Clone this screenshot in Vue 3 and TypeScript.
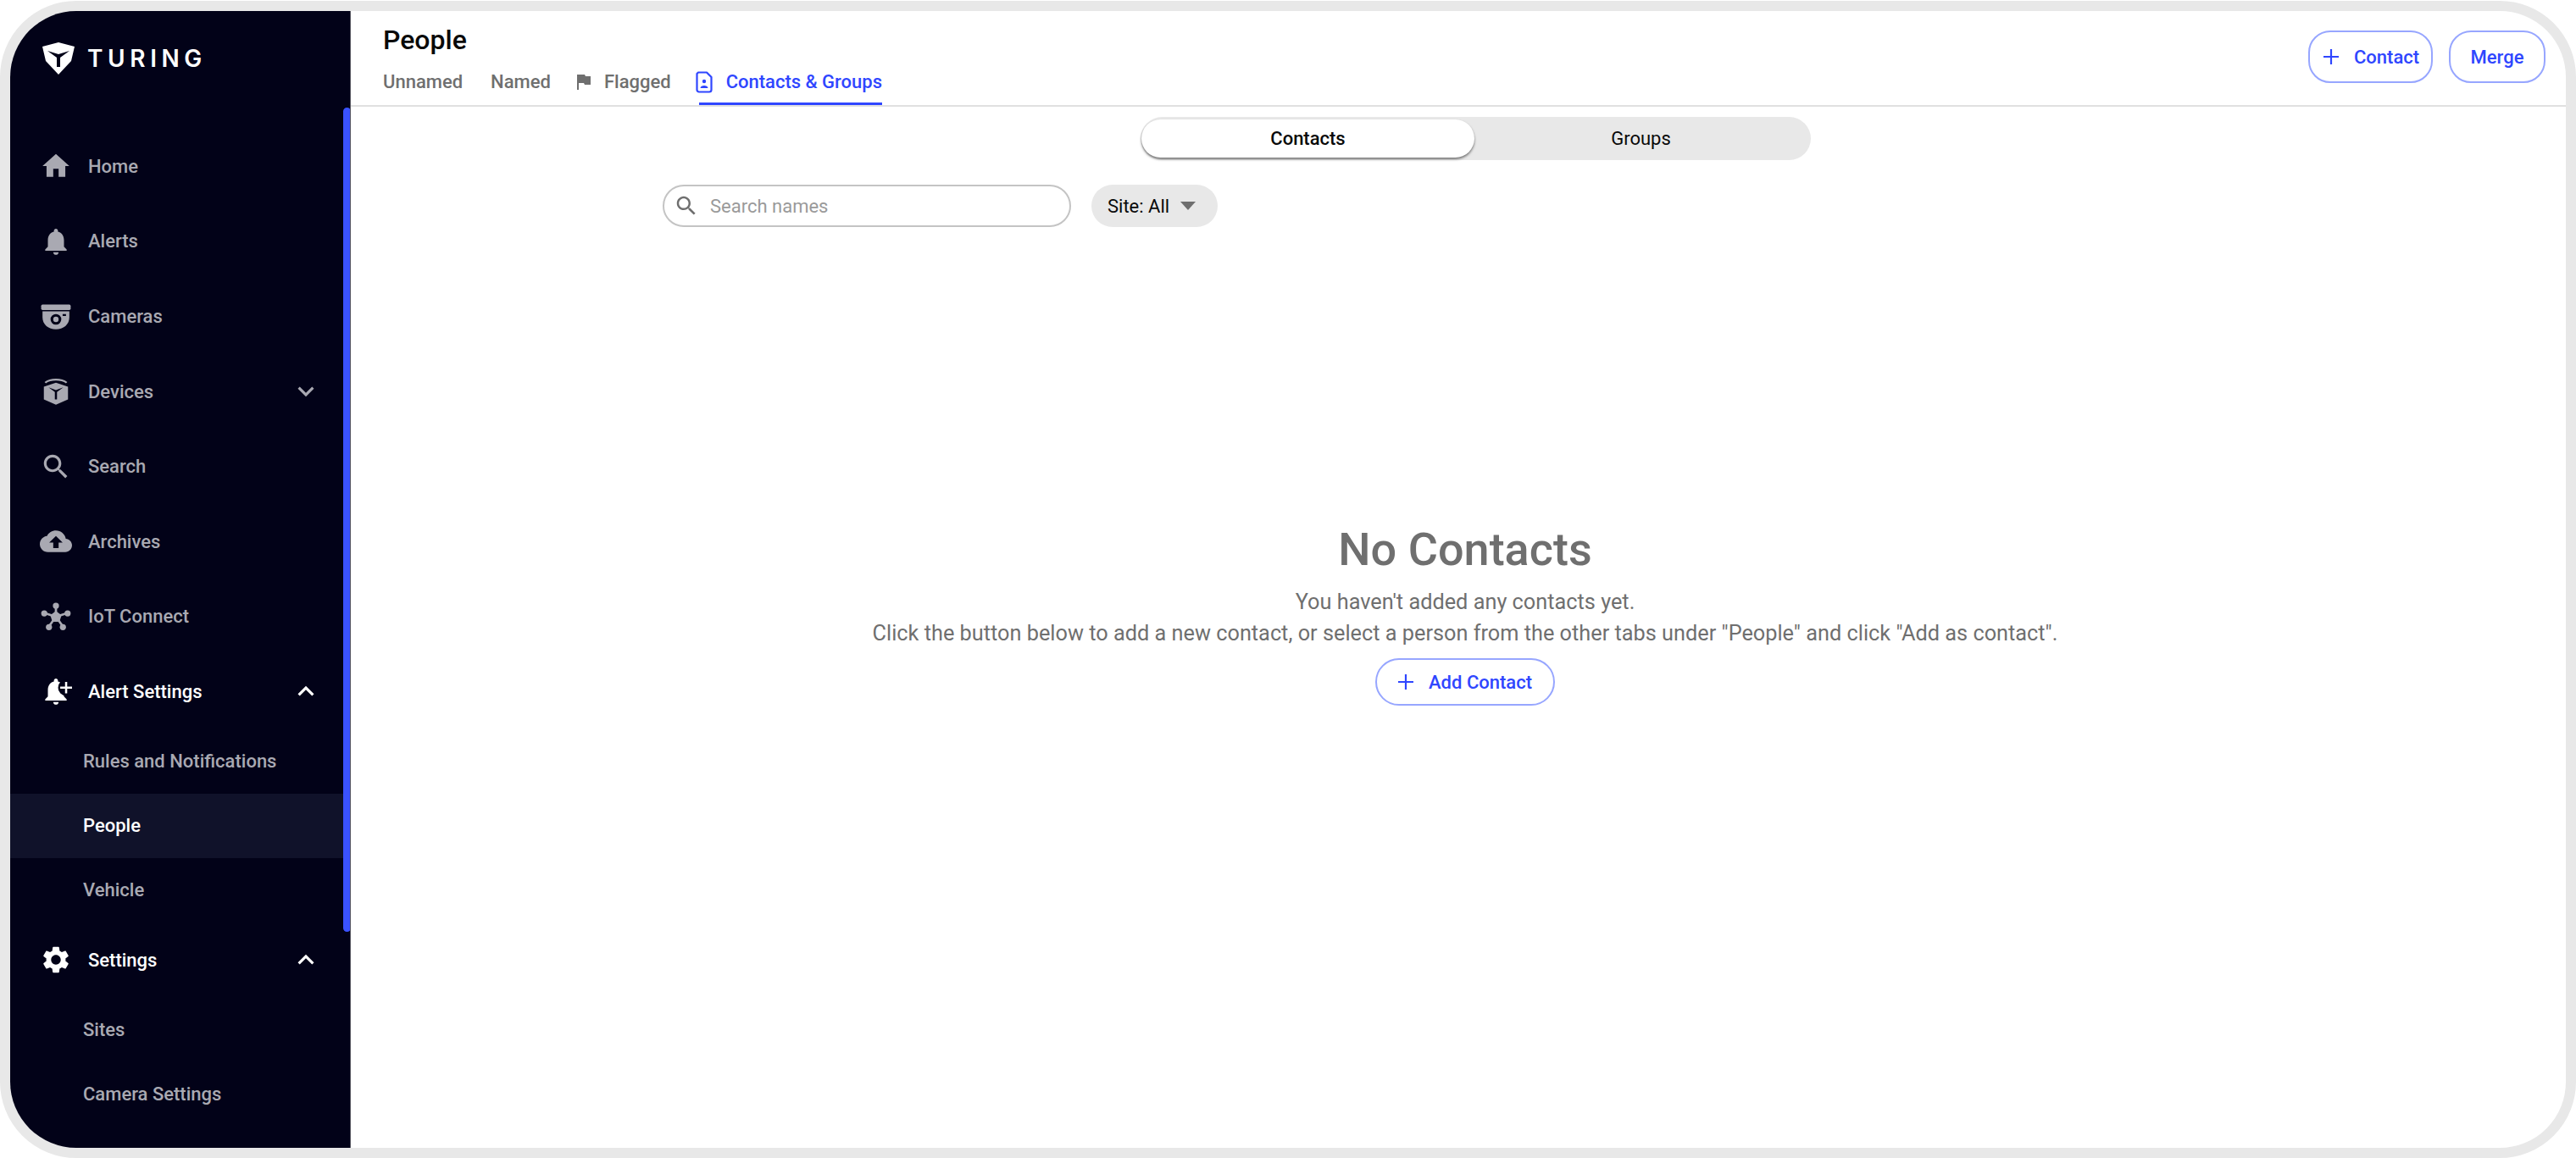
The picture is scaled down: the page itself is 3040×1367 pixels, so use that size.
<script setup lang="ts">
interface NavItem {
  label: string
  icon?: string
  chevron?: 'up' | 'down'
  active?: boolean
  sub?: boolean
  selected?: boolean
}
const nav: NavItem[] = [
  { label: 'Home', icon: 'home' },
  { label: 'Alerts', icon: 'bell' },
  { label: 'Cameras', icon: 'camera' },
  { label: 'Devices', icon: 'cube', chevron: 'down' },
  { label: 'Search', icon: 'search' },
  { label: 'Archives', icon: 'cloud' },
  { label: 'IoT Connect', icon: 'hub' },
  { label: 'Alert Settings', icon: 'bellplus', chevron: 'up', active: true },
  { label: 'Rules and Notifications', sub: true },
  { label: 'People', sub: true, selected: true },
  { label: 'Vehicle', sub: true },
  { label: 'Settings', icon: 'gear', chevron: 'up', active: true },
  { label: 'Sites', sub: true },
  { label: 'Camera Settings', sub: true },
]
</script>

<template>
  <div class="frame">
    <aside class="sidebar">
      <div class="logo">
        <svg class="logo-mark" viewBox="0 0 38 38">
          <path fill="#fff" fill-rule="evenodd" d="M0 5 19 0 38 5 34 22 19 38 4 22ZM6 10 17 18 17 29 21 29 21 18 32 10 19 14Z" />
        </svg>
        <span class="logo-text">TURING</span>
      </div>
      <nav class="nav">
        <div
          v-for="item in nav"
          :key="item.label"
          class="row"
          :class="{ sub: item.sub, active: item.active, selected: item.selected }"
        >
          <svg v-if="item.icon" class="icon" viewBox="0 0 24 24" fill="currentColor">
            <path v-if="item.icon === 'home'" d="M10 20v-6h4v6h5v-8h3L12 3 2 12h3v8z" />
            <path v-else-if="item.icon === 'bell'" d="M12 22c1.1 0 2-.9 2-2h-4c0 1.1.89 2 2 2zm6-6v-5c0-3.07-1.64-5.64-4.5-6.32V4c0-.83-.67-1.5-1.5-1.5s-1.5.67-1.5 1.5v.68C7.63 5.36 6 7.92 6 11v5l-2 2v1h16v-1l-2-2z" />
            <g v-else-if="item.icon === 'camera'">
              <rect x="1" y="3.500" width="22" height="4" rx="1" />
              <path fill-rule="evenodd" d="M2 8.500H22V13C22 18.500 17.500 22 12 22S2 18.500 2 13ZM12 10.500A4 4 0 1 0 12 18.500 4 4 0 0 0 12 10.500ZM17 10.500H19.500V12H17Z" />
              <circle cx="12" cy="14.500" r="2" />
            </g>
            <g v-else-if="item.icon === 'cube'">
              <path d="M12 2.500C8.500 2.500 5.500 3.300 3.500 5L4.500 6C6.300 4.700 9 4 12 4S17.700 4.700 19.500 6L20.500 5C18.500 3.300 15.500 2.500 12 2.500Z" />
              <path fill-rule="evenodd" d="M12 5.500 21 8.500V18L12 22 3 18V8.500ZM6.500 9 11.200 12.500V18H12.800V12.500L17.500 9 12 11Z" />
            </g>
            <path v-else-if="item.icon === 'search'" d="M15.500 14h-.79l-.28-.27C15.410 12.590 16 11.110 16 9.500 16 5.910 13.090 3 9.500 3S3 5.910 3 9.500 5.910 16 9.500 16c1.610 0 3.090-.59 4.230-1.570l.27.280v.79l5 4.990L20.490 19l-4.990-5zm-6 0C7.010 14 5 11.990 5 9.500S7.010 5 9.500 5 14 7.010 14 9.500 11.990 14 9.500 14z" />
            <path v-else-if="item.icon === 'cloud'" d="M19.350 10.040C18.670 6.590 15.640 4 12 4 9.110 4 6.600 5.640 5.350 8.040 2.340 8.360 0 10.910 0 14c0 3.310 2.690 6 6 6h13c2.760 0 5-2.240 5-5 0-2.640-2.050-4.780-4.650-4.960zM14 13v4h-4v-4H7l5-5 5 5h-3z" />
            <g v-else-if="item.icon === 'hub'">
              <path d="M12 12V4M12 12 4 9.500M12 12 20 9.500M12 12 7 19M12 12 17 19" stroke="currentColor" stroke-width="1.700" />
              <path d="M12 7.800 16.200 10.900 14.600 15.800H9.400L7.800 10.900Z" />
              <circle cx="12" cy="3.800" r="2.300" />
              <circle cx="3.300" cy="9.500" r="2.300" />
              <circle cx="20.700" cy="9.500" r="2.300" />
              <circle cx="6.800" cy="19.800" r="2.300" />
              <circle cx="17.200" cy="19.800" r="2.300" />
            </g>
            <g v-else-if="item.icon === 'bellplus'">
              <path d="M12 22c1.100 0 2-.9 2-2h-4c0 1.100.89 2 2 2zm6-6v-5c0-3.070-1.640-5.640-4.500-6.320V4c0-.83-.67-1.500-1.500-1.500s-1.500.67-1.500 1.500v.68C7.630 5.360 6 7.920 6 11v5l-2 2v1h16v-1l-2-2z" />
              <circle cx="19.600" cy="9.300" r="6" fill="#020218" />
              <path d="M18.800 5h1.600v3.500h3.600v1.600h-3.600v3.500h-1.600v-3.500h-3.600V8.500h3.600z" />
            </g>
            <path v-else-if="item.icon === 'gear'" d="M19.140 12.940c.04-.3.060-.61.060-.94 0-.32-.02-.64-.07-.94l2.030-1.580c.18-.14.230-.41.120-.61l-1.920-3.320c-.12-.22-.37-.29-.59-.22l-2.390.96c-.5-.38-1.030-.7-1.620-.94l-.36-2.540c-.04-.24-.24-.41-.48-.41h-3.840c-.24 0-.43.170-.47.410l-.36 2.540c-.59.240-1.130.570-1.620.94l-2.390-.96c-.22-.08-.47 0-.59.220L2.740 8.870c-.12.210-.08.470.120.610l2.030 1.580c-.05.3-.09.630-.09.940s.020.640.070.940l-2.030 1.580c-.18.140-.23.410-.12.610l1.920 3.320c.12.220.370.290.590.220l2.390-.96c.5.380 1.030.7 1.620.94l.36 2.540c.050.240.240.410.480.410h3.840c.24 0 .44-.17.470-.41l.36-2.540c.59-.24 1.130-.56 1.620-.94l2.390.96c.22.080.47 0 .59-.22l1.920-3.320c.12-.22.070-.47-.12-.61l-2.010-1.580zM12 15.600c-1.980 0-3.600-1.620-3.600-3.600s1.620-3.600 3.600-3.600 3.600 1.620 3.600 3.600-1.620 3.600-3.600 3.600z" />
          </svg>
          <span class="row-label">{{ item.label }}</span>
          <svg v-if="item.chevron" class="chev" :class="{ up: item.chevron === 'up' }" viewBox="0 0 24 24" fill="currentColor">
            <path d="M16.590 8.590 12 13.170 7.410 8.590 6 10l6 6 6-6z" />
          </svg>
        </div>
      </nav>
      <div class="scrollbar"></div>
    </aside>

    <main class="main">
      <header class="header">
        <div class="header-left">
          <h1 class="title">People</h1>
          <div class="tabs">
            <span class="tab">Unnamed</span>
            <span class="tab">Named</span>
            <span class="tab with-icon">
              <svg class="tab-icon flag" viewBox="0 0 18 20" fill="#6f6f6f"><path d="M1 1h9l1 2h6v10h-7l-1-2H3v8H1z" /></svg>
              Flagged
            </span>
            <span class="tab with-icon current">
              <svg class="tab-icon doc" viewBox="0 0 20 26" fill="none" stroke="currentColor" stroke-width="2.200">
                <path d="M3 1.500H13L18.500 7V22A2.500 2.500 0 0 1 16 24.500H4A2.500 2.500 0 0 1 1.500 22V3Z" stroke-linejoin="round" />
                <circle cx="10" cy="12" r="2.200" fill="currentColor" stroke="none" />
                <path d="M5.500 20C5.500 16 14.500 16 14.500 20Z" fill="currentColor" stroke="none" />
              </svg>
              Contacts &amp; Groups
            </span>
          </div>
        </div>
        <div class="header-actions">
          <button class="btn contact" type="button">
            <svg class="plus" viewBox="0 0 18 18" stroke="currentColor" stroke-width="2.200"><path d="M9 0V18M0 9H18" /></svg>
            Contact
          </button>
          <button class="btn merge" type="button">Merge</button>
        </div>
      </header>

      <section class="content">
        <div class="segment">
          <div class="seg seg-on">Contacts</div>
          <div class="seg seg-off">Groups</div>
        </div>

        <div class="toolbar">
          <div class="search">
            <svg class="search-icon" viewBox="0 0 24 24" fill="#6f6f6f"><path d="M15.500 14h-.79l-.28-.27C15.410 12.590 16 11.110 16 9.500 16 5.910 13.090 3 9.500 3S3 5.910 3 9.500 5.910 16 9.500 16c1.610 0 3.090-.59 4.230-1.570l.27.280v.79l5 4.990L20.490 19l-4.990-5zm-6 0C7.010 14 5 11.990 5 9.500S7.010 5 9.500 5 14 7.010 14 9.500 11.990 14 9.500 14z" /></svg>
            <span class="placeholder">Search names</span>
          </div>
          <div class="site">
            Site: All
            <span class="caret"></span>
          </div>
        </div>

        <div class="empty">
          <h2 class="empty-title">No Contacts</h2>
          <p class="empty-text">You haven't added any contacts yet.</p>
          <p class="empty-text">Click the button below to add a new contact, or select a person from the other tabs under "People" and click "Add as contact".</p>
          <button class="btn add" type="button">
            <svg class="plus" viewBox="0 0 18 18" stroke="currentColor" stroke-width="2.200"><path d="M9 0V18M0 9H18" /></svg>
            Add Contact
          </button>
        </div>
      </section>
    </main>
  </div>
</template>

<style scoped>
.frame {
  box-sizing: border-box;
  width: 3040px;
  height: 1366px;
  margin-top: 1px;
  border: 12px solid #e8e8e8;
  border-radius: 90px;
  overflow: hidden;
  display: flex;
  background: #fff;
  font-family: Roboto, "Liberation Sans", sans-serif;
}
.sidebar {
  position: relative;
  box-sizing: border-box;
  flex: 0 0 402px;
  height: 100%;
  background: #020218;
  border-right: 1px solid #55555f;
  overflow: hidden;
}
.logo {
  display: flex;
  align-items: center;
  height: 139px;
  padding: 0 0 27px 38px;
  box-sizing: border-box;
  color: #fff;
}
.logo-mark {
  width: 38px;
  height: 38px;
}
.logo-text {
  margin-left: 15px;
  font-family: Inter, sans-serif;
  font-size: 28px;
  font-weight: 600;
  letter-spacing: 5.6px;
}
.row {
  display: flex;
  align-items: center;
  height: 88.6px;
  padding: 0 35px;
  color: #a9a9b2;
  font-size: 22px;
  font-weight: 500;
}
.row.active {
  color: #fff;
}
.row.sub {
  height: 76px;
  padding-left: 86px;
}
.row.selected {
  background: #10122a;
  color: #fff;
}
.icon {
  flex: 0 0 38px;
  width: 38px;
  height: 38px;
  margin-right: 19px;
}
.chev {
  width: 38px;
  height: 38px;
  margin-left: auto;
  margin-right: -2px;
}
.chev.up {
  transform: rotate(180deg);
}
.scrollbar {
  position: absolute;
  top: 114px;
  left: 393px;
  width: 9px;
  height: 973px;
  border-radius: 5px;
  background: #3a52ff;
}
.main {
  flex: 1;
  min-width: 0;
  display: flex;
  flex-direction: column;
}
.header {
  box-sizing: border-box;
  height: 113px;
  flex: 0 0 113px;
  border-bottom: 2px solid #e0e0e0;
  display: flex;
  justify-content: space-between;
  padding: 0 24px 0 38px;
}
.title {
  margin: 15px 0 0;
  font-size: 32px;
  line-height: 38px;
  font-weight: 500;
  color: #0a0a0a;
}
.tabs {
  display: flex;
  margin-top: 16px;
  gap: 33px;
}
.tab {
  display: flex;
  align-items: flex-start;
  height: 42px;
  box-sizing: border-box;
  font-size: 22px;
  line-height: 30px;
  font-weight: 500;
  color: #6f6f6f;
}
.tab.current {
  color: #2f46ff;
  box-shadow: inset 0 -3px 0 #2f46ff;
}
.tab-icon {
  width: 18px;
  height: 20px;
  margin: 5px 15px 0 0;
}
.tab-icon.flag {
  margin-left: -3px;
}
.tab-icon.doc {
  width: 20px;
  height: 26px;
  margin: 2px 16px 0 -4px;
}
.header-actions {
  display: flex;
  gap: 19px;
  padding-top: 23px;
}
.btn {
  display: inline-flex;
  align-items: center;
  justify-content: center;
  box-sizing: border-box;
  height: 62px;
  padding: 0;
  border: 2px solid #97a6ff;
  border-radius: 26px;
  background: #fff;
  color: #2f46ff;
  font: 500 22px Roboto, "Liberation Sans", sans-serif;
}
.btn.contact {
  width: 147px;
  justify-content: flex-start;
  padding-left: 16px;
}
.btn.merge {
  width: 114px;
}
.plus {
  width: 18px;
  height: 18px;
  margin-right: 18px;
}
.content {
  flex: 1;
  min-height: 0;
  display: flex;
  flex-direction: column;
}
.segment {
  box-sizing: border-box;
  display: flex;
  width: 791px;
  height: 51px;
  margin: 12px 0 0 932px;
  padding: 3px 0;
  border-radius: 26px;
  background: #e8e8e8;
}
.seg {
  display: flex;
  align-items: center;
  justify-content: center;
  font-size: 22px;
  font-weight: 400;
  color: #0a0a0a;
}
.seg-on {
  flex: 0 0 393px;
  background: #fff;
  border-radius: 23px;
  box-shadow: 0 2px 3px rgba(0, 0, 0, 0.5);
  margin-left: 1px;
  font-weight: 500;
}
.seg-off {
  flex: 1;
  padding-right: 4px;
}
.toolbar {
  display: flex;
  gap: 24px;
  margin: 29px 0 0 368px;
}
.search {
  box-sizing: border-box;
  display: flex;
  align-items: center;
  width: 482px;
  height: 50px;
  padding-left: 11px;
  border: 2px solid #c4c4c4;
  border-radius: 25px;
}
.search-icon {
  width: 30px;
  height: 30px;
}
.placeholder {
  margin-left: 13px;
  font-size: 22px;
  color: #9a9a9a;
}
.site {
  box-sizing: border-box;
  display: flex;
  align-items: center;
  width: 149px;
  height: 50px;
  padding-left: 19px;
  border-radius: 25px;
  background: #e8e8e8;
  font-size: 22px;
  color: #0a0a0a;
}
.caret {
  margin-left: 13px;
  width: 0;
  height: 0;
  border-left: 9px solid transparent;
  border-right: 9px solid transparent;
  border-top: 10px solid #6f6f6f;
}
.empty {
  display: flex;
  flex-direction: column;
  align-items: center;
  width: 2630px;
  margin-top: 351px;
}
.empty-title {
  margin: 0 0 13px;
  font-size: 54px;
  line-height: 60px;
  font-weight: 500;
  color: #6f6f6f;
}
.empty-text {
  margin: 0;
  font-size: 25.3px;
  line-height: 37px;
  color: #6f6f6f;
}
.btn.add {
  width: 212px;
  height: 56px;
  margin-top: 11px;
  border-radius: 28px;
}
</style>

<style>
html,
body {
  margin: 0;
  background: #fff;
}
</style>
